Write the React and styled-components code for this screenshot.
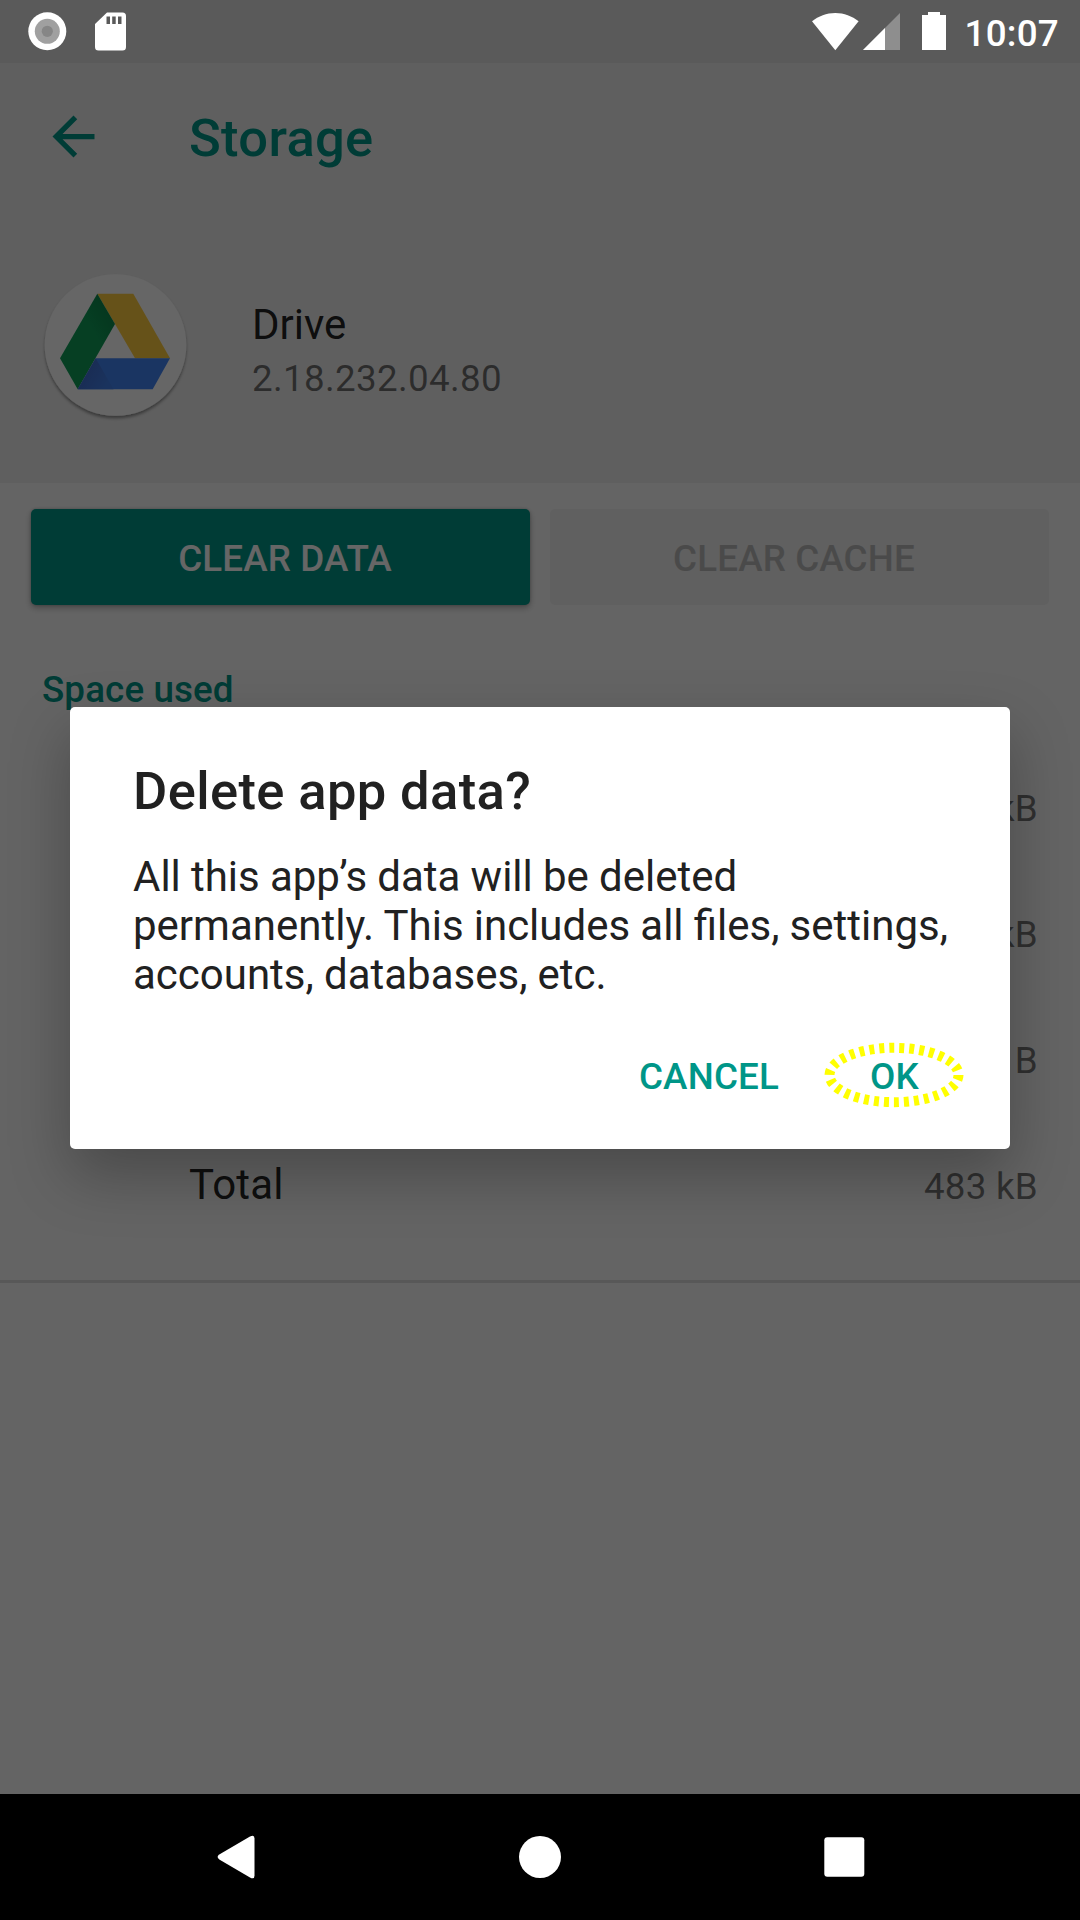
import React from "react";
import styled, { createGlobalStyle } from "styled-components";

const GlobalStyle = createGlobalStyle`
  * { box-sizing: border-box; }
  body { margin: 0; background: #646464; font-family: Roboto, "Noto Sans", sans-serif; }
`;

const Screen = styled.div`
  position: relative;
  display: flex;
  flex-direction: column;
  width: 1080px;
  height: 1920px;
  overflow: hidden;
`;

const StatusBar = styled.header`
  display: flex;
  align-items: flex-start;
  justify-content: space-between;
  height: 63px;
  padding: 0 21px 0 28px;
  background: #5a5a5a;
  color: #fff;
`;

const StatusGroup = styled.div`
  display: flex;
  align-items: flex-start;
  height: 63px;
  padding-top: 12px;
  gap: ${(p) => p.$gap || 0}px;
`;

const SignalSlot = styled.div`
  display: flex;
  margin: 0 21px 0 4px;
`;

const Clock = styled.span`
  margin-left: 19px;
  font-size: 36.75px;
  font-weight: 500;
  letter-spacing: 0.25px;
  line-height: 43px;
`;

const Content = styled.main`
  flex: 1;
  display: flex;
  flex-direction: column;
  background: #fafafa;
`;

const Masthead = styled.section`
  height: 420px;
  background: #eeeeee;
`;

const Toolbar = styled.div`
  display: flex;
  align-items: center;
  height: 147px;
  padding-left: 42px;
`;

const ToolbarTitle = styled.h1`
  margin: 3px 0 0 84px;
  color: #009688;
  font-size: 52.5px;
  font-weight: 500;
  letter-spacing: 0.33px;
  line-height: 62px;
`;

const AppHeader = styled.div`
  display: flex;
  align-items: flex-start;
  gap: 56px;
  padding: 55px 36px 0;
`;

const AppText = styled.div`
  display: flex;
  flex-direction: column;
  gap: 8px;
  padding-top: 35px;
`;

const AppName = styled.div`
  color: rgba(0, 0, 0, 0.87);
  font-size: 42px;
  line-height: 49px;
`;

const AppVersion = styled.div`
  color: rgba(0, 0, 0, 0.54);
  font-size: 36.75px;
  letter-spacing: 0.34px;
  line-height: 43px;
`;

const ButtonRow = styled.div`
  display: flex;
  gap: 20px;
  padding: 26px 31px 0;
`;

const RaisedButton = styled.button`
  flex: 1 1 0;
  height: 96px;
  padding: ${(p) => (p.disabled ? "2px 10.5px 0 0" : "2px 0 0 9.5px")};
  border: 0;
  border-radius: 5px;
  font: 500 36.75px/43px Roboto, sans-serif;
  letter-spacing: 0.15px;
  background: ${(p) => (p.disabled ? "#f0f0f0" : "#009688")};
  color: ${(p) => (p.disabled ? "#bababa" : "#fff")};
  box-shadow: ${(p) => (p.disabled ? "none" : "0 3px 6px rgba(0,0,0,.28), 0 0 3px rgba(0,0,0,.2)")};
`;

const SectionTitle = styled.h2`
  margin: 63px 0 35px 42px;
  color: #009688;
  font-size: 36.75px;
  font-weight: 500;
  letter-spacing: 0.12px;
  line-height: 43px;
`;

const Row = styled.div`
  display: flex;
  align-items: baseline;
  height: 126px;
  padding: 36px 42px 0 189px;
`;

const RowLabel = styled.span`
  color: rgba(0, 0, 0, 0.87);
  font-size: 42px;
  letter-spacing: 0.15px;
  line-height: 49px;
`;

const RowValue = styled.span`
  margin-left: auto;
  color: rgba(0, 0, 0, 0.54);
  font-size: 36.75px;
  letter-spacing: 0.25px;
  line-height: 53px;
`;

const Divider = styled.hr`
  width: 100%;
  height: 3px;
  margin: 30px 0 0;
  border: 0;
  background: #dcdcdc;
`;

const Scrim = styled.div`
  position: absolute;
  inset: 63px 0 126px;
  display: flex;
  align-items: center;
  justify-content: center;
  background: rgba(0, 0, 0, 0.6);
`;

const Dialog = styled.section`
  display: flex;
  flex-direction: column;
  width: 940px;
  height: 442px;
  margin-bottom: 1px;
  padding: 53px 31px 25px 63px;
  border-radius: 5px;
  background: #fff;
  color: #212121;
  box-shadow: 0 26px 60px rgba(0, 0, 0, 0.27);
`;

const DialogTitle = styled.h2`
  margin: 0;
  font-size: 52.5px;
  font-weight: 500;
  letter-spacing: 0.38px;
  line-height: 62px;
`;

const DialogText = styled.p`
  margin: 30px 0 0;
  font-size: 42px;
  word-spacing: -0.25px;
  line-height: 49px;
`;

const Actions = styled.div`
  display: flex;
  justify-content: flex-end;
  margin-top: auto;
`;

const FlatButton = styled.button`
  position: relative;
  width: ${(p) => p.$width}px;
  height: 96px;
  padding: 0 1px 0 0;
  border: 0;
  background: none;
  color: #009688;
  font: 500 36.75px/43px Roboto, sans-serif;
  letter-spacing: 0.18px;
`;

const Highlight = styled.svg`
  position: absolute;
  left: 12px;
  top: 14px;
`;

const NavBar = styled.nav`
  display: flex;
  align-items: center;
  justify-content: center;
  gap: 252px;
  height: 126px;
  background: #000;
`;

const CameraIcon = () => (
  <svg width="39" height="39" viewBox="0 0 39 39">
    <circle cx="19.3" cy="19.3" r="19" fill="#fff" />
    <circle cx="19.3" cy="19.3" r="12.5" fill="#a0a0a0" />
    <circle cx="19.3" cy="19.3" r="5.6" fill="#868686" />
  </svg>
);

const SdIcon = () => (
  <svg width="31" height="39" viewBox="0 0 31 39">
    <path
      fill="#fff"
      fillRule="evenodd"
      d="M12 .5H27.5Q31 .5 31 4V35Q31 38.5 27.5 38.5H3.5Q0 38.5 0 35V12ZM11.5 4.5V12H15V4.5ZM17.2 4.5V12H20.7V4.5ZM23 4.5V12H26.5V4.5Z"
    />
  </svg>
);

const WifiIcon = () => (
  <svg width="47" height="39" viewBox="0 0 47 39">
    <path fill="#fff" d="M23.3 38.2L0 9.3C6.5 4 14.5.9 23.3.9S40 4 46.6 9.3Z" />
  </svg>
);

const SignalIcon = () => (
  <svg width="38" height="39" viewBox="0 0 38 39">
    <path fill="#8e8e8e" d="M0 38L37 1V38Z" />
    <path fill="#fff" d="M0 38L22 16V38Z" />
  </svg>
);

const BatteryIcon = () => (
  <svg width="24" height="39" viewBox="0 0 24 39">
    <path fill="#fff" d="M6 0H18V3H24V38H0V3H6Z" />
  </svg>
);

const BackArrow = () => (
  <svg width="63" height="63" viewBox="0 0 24 24" fill="#009688">
    <path d="M20 11H7.83l5.59-5.59L12 4l-8 8 8 8 1.41-1.41L7.83 13H20v-2z" />
  </svg>
);

const DriveIcon = () => (
  <svg width="160" height="160" viewBox="36 265 160 160">
    <defs>
      <filter id="discShadow" x="-10%" y="-10%" width="120%" height="120%">
        <feDropShadow dx="0" dy="2.5" stdDeviation="1.5" floodOpacity="0.4" />
      </filter>
      <linearGradient id="greenFold" gradientUnits="userSpaceOnUse" x1="107" y1="308" x2="87" y2="320">
        <stop offset="0" stopColor="#0d8a4d" />
        <stop offset="1" stopColor="#0f9d58" />
      </linearGradient>
      <linearGradient id="blueFold" gradientUnits="userSpaceOnUse" x1="84" y1="374" x2="106" y2="386">
        <stop offset="0" stopColor="#406fd2" />
        <stop offset="1" stopColor="#4280ea" />
      </linearGradient>
    </defs>
    <circle cx="115.5" cy="345" r="70.8" fill="#fff" filter="url(#discShadow)" />
    <path d="M97.3 293.7H133.3L170 358.3H135Z" fill="#ffcd40" />
    <path d="M97.3 293.7L115 324L77.7 389.3L60 358.3Z" fill="url(#greenFold)" />
    <path d="M95.7 358.3H170L152.7 389.3H77.7Z" fill="#4285f4" />
    <path d="M95.7 358.3L113.5 389.3H77.7Z" fill="url(#blueFold)" />
  </svg>
);

export default function App() {
  return (
    <>
      <GlobalStyle />
      <Screen>
        <StatusBar>
          <StatusGroup $gap={28}>
            <CameraIcon />
            <SdIcon />
          </StatusGroup>
          <StatusGroup>
            <WifiIcon />
            <SignalSlot>
              <SignalIcon />
            </SignalSlot>
            <BatteryIcon />
            <Clock>10:07</Clock>
          </StatusGroup>
        </StatusBar>
        <Content>
          <Masthead>
            <Toolbar>
              <BackArrow />
              <ToolbarTitle>Storage</ToolbarTitle>
            </Toolbar>
            <AppHeader>
              <DriveIcon />
              <AppText>
                <AppName>Drive</AppName>
                <AppVersion>2.18.232.04.80</AppVersion>
              </AppText>
            </AppHeader>
          </Masthead>
          <ButtonRow>
            <RaisedButton>CLEAR DATA</RaisedButton>
            <RaisedButton disabled>CLEAR CACHE</RaisedButton>
          </ButtonRow>
          <SectionTitle>Space used</SectionTitle>
          <Row><RowValue>kB</RowValue></Row>
          <Row><RowValue>kB</RowValue></Row>
          <Row><RowValue>B</RowValue></Row>
          <Row>
            <RowLabel>Total</RowLabel>
            <RowValue>483 kB</RowValue>
          </Row>
          <Divider />
        </Content>
        <Scrim>
          <Dialog role="dialog">
            <DialogTitle>Delete app data?</DialogTitle>
            <DialogText>
              All this app’s data will be deleted permanently. This includes all files, settings, accounts, databases, etc.
            </DialogText>
            <Actions>
              <FlatButton $width={203}>CANCEL</FlatButton>
              <FlatButton $width={168}>
                OK
                <Highlight width="142" height="66" viewBox="0 0 142 66">
                  <ellipse cx="71" cy="33" rx="64.5" ry="27.2" fill="none" stroke="#ff0" strokeWidth="10" strokeDasharray="5 5" />
                </Highlight>
              </FlatButton>
            </Actions>
          </Dialog>
        </Scrim>
        <NavBar>
          <svg width="64" height="64" viewBox="0 0 64 64">
            <path d="M16.7 29.3L47 11.6Q51.5 9.2 51.5 13.5V50.5Q51.5 54.8 47 52.4L16.7 34.7Q12.5 32 16.7 29.3Z" fill="#fff" />
          </svg>
          <svg width="42" height="42" viewBox="0 0 42 42">
            <circle cx="21" cy="21" r="21" fill="#fff" />
          </svg>
          <svg width="64" height="64" viewBox="0 0 64 64">
            <rect x="11.3" y="12.2" width="40" height="39.6" rx="3" fill="#fff" />
          </svg>
        </NavBar>
      </Screen>
    </>
  );
}
